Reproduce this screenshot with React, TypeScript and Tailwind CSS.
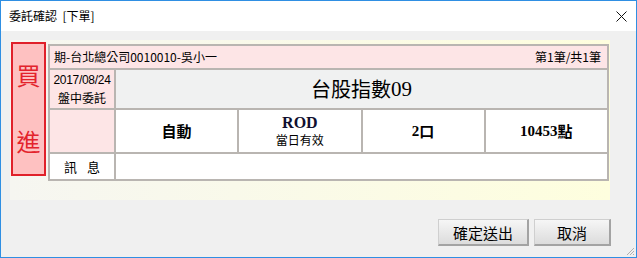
import React from 'react';

const cell = 'bg-white flex items-center justify-center';

const App: React.FC = () => {
  return (
    <div className="w-[637px] h-[258px] border border-[#2f8fe3] bg-[#f0f0f0] flex flex-col relative font-['Noto_Sans_CJK_TC',sans-serif] text-black">
      {/* title bar */}
      <div className="h-[30px] bg-white flex items-center justify-between pl-[8px] pr-[9px]">
        <span className="text-[12px] leading-none">委託確認&nbsp;&nbsp;[下單]</span>
        <svg width="11" height="11" viewBox="0 0 11 11">
          <path d="M0.5 0.5 L10.5 10.5 M10.5 0.5 L0.5 10.5" stroke="#111" strokeWidth="1" />
        </svg>
      </div>

      <div className="pl-[9px] pt-[9px]">
        <div className="w-[600px] h-[160px] bg-linear-to-r from-[#f6f6f1] to-[#fefede] flex items-start pl-[1px] pt-[2px]">
          {/* buy / sell marker */}
          <div className="w-[35px] h-[134px] border-2 border-[#e0212a] bg-[#fec1c1] flex flex-col items-center pt-[19px] gap-[42px] text-[#e3232c] text-[24px] leading-[24px]">
            <span>買</span>
            <span>進</span>
          </div>

          {/* order table */}
          <div className="ml-[2px] mt-[2px] w-[561px] bg-[#b9b5b1] p-[2px] grid grid-cols-[64px_repeat(4,1fr)] grid-rows-[22px_38px_42px_25px] gap-[2px]">
            <div className="col-span-5 bg-[#fde5e6] flex items-center justify-between pl-[4px] pr-[6px] text-[12px] leading-none">
              <span>期-台北總公司0010010-吳小一</span>
              <span>第1筆/共1筆</span>
            </div>

            <div className="bg-[#fde5e6] flex flex-col items-center justify-center text-[12px] leading-[17px]">
              <span className="font-['Liberation_Sans',sans-serif] tracking-[-0.3px]">2017/08/24</span>
              <span>盤中委託</span>
            </div>
            <div className="col-span-4 bg-[#f0f1f1] flex items-center justify-center text-[20px] leading-none">
              台股指數<span className="font-['Liberation_Serif',serif] text-[21px]">09</span>
            </div>

            <div className="bg-[#fde5e6]" />
            <div className={`${cell} text-[15px] font-bold`}>自動</div>
            <div className={`${cell} flex-col`}>
              <span className="font-['Liberation_Serif',serif] font-bold text-[16px] leading-[18px] text-[#101030]">ROD</span>
              <span className="text-[12px] leading-[16px]">當日有效</span>
            </div>
            <div className={`${cell} text-[15px] font-bold`}>
              <span className="font-['Liberation_Serif',serif]">2</span>口
            </div>
            <div className={`${cell} text-[15px] font-bold`}>
              <span className="font-['Liberation_Serif',serif]">10453</span>點
            </div>

            <div className={`${cell} text-[13px] gap-[10px]`}>
              <span>訊</span>
              <span>息</span>
            </div>
            <div className="col-span-4 bg-white" />
          </div>
        </div>
      </div>

      {/* buttons */}
      <div className="flex justify-end gap-[5px] pr-[25px] mt-[19px]">
        <button className="w-[91px] h-[27px] border border-[#cfcfcf] border-r-2 border-b-2 border-r-[#a3a3a3] border-b-[#a3a3a3] bg-linear-to-b from-[#f6f6f6] to-[#dcdcdc] text-[15px] leading-none">
          確定送出
        </button>
        <button className="w-[77px] h-[27px] border border-[#cfcfcf] border-r-2 border-b-2 border-r-[#a3a3a3] border-b-[#a3a3a3] bg-linear-to-b from-[#f6f6f6] to-[#dcdcdc] text-[15px] leading-none">
          取消
        </button>
      </div>

      {/* resize grip */}
      <svg className="absolute right-[1px] bottom-[1px]" width="10" height="10" viewBox="0 0 10 10">
        <path d="M9 2 L2 9 M9 5 L5 9 M9 8 L8 9" stroke="#b0b0b0" strokeWidth="1" />
      </svg>
    </div>
  );
};

export default App;
